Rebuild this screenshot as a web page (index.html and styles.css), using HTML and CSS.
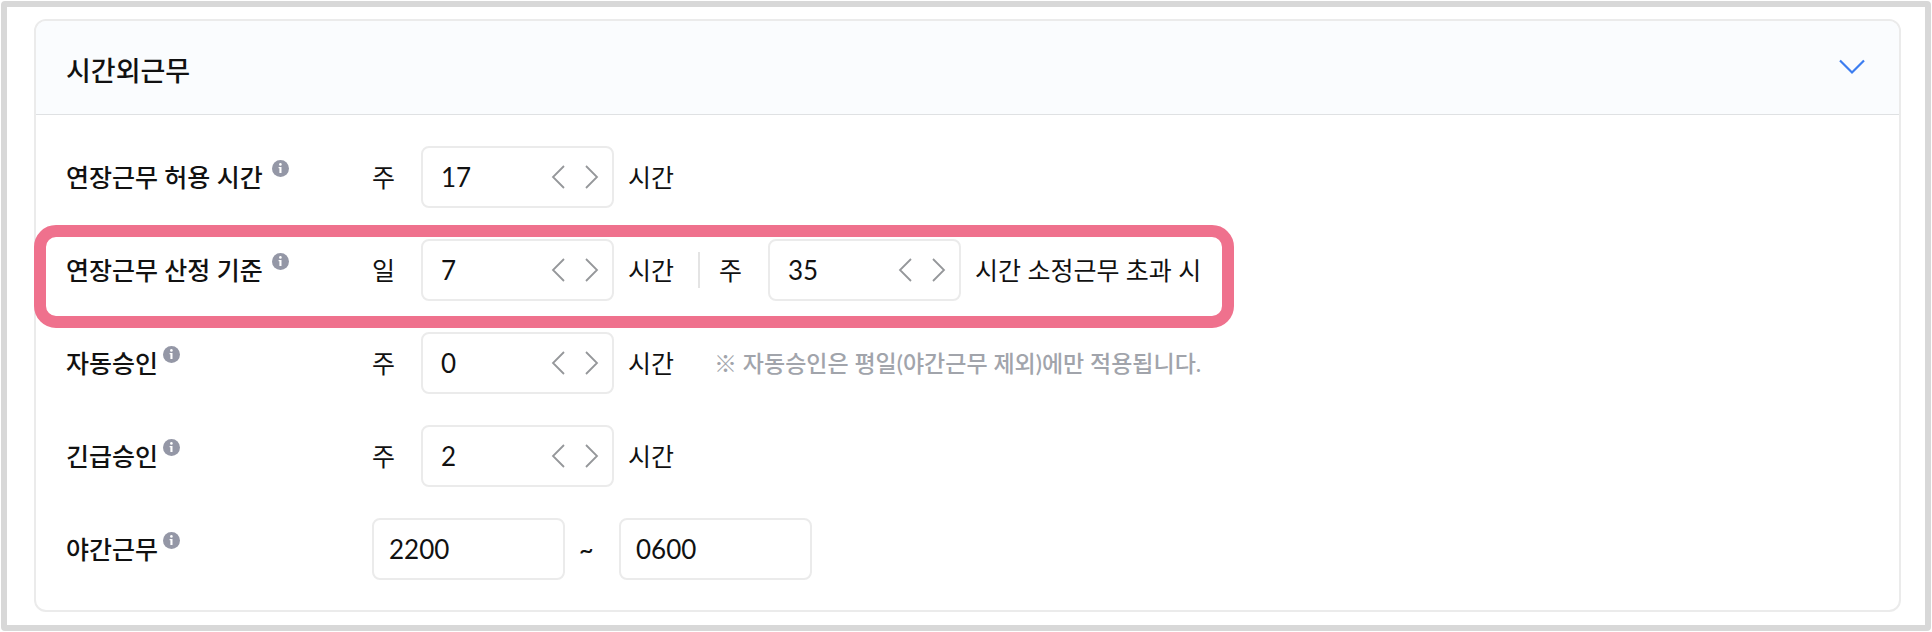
FILE: index.html
```html
<!DOCTYPE html>
<html lang="ko">
<head>
<meta charset="utf-8">
<meta name="viewport" content="width=device-width, initial-scale=1">
<title>시간외근무</title>
<link rel="stylesheet" href="styles.css">
</head>
<body>
<svg class="sprite" aria-hidden="true">
  <symbol id="info" viewBox="0 0 17 17"><circle cx="8.5" cy="8.5" r="8.5" fill="#9497a6"/><circle cx="8.4" cy="4.4" r="1.3" fill="#fff"/><path d="M6.6 7h2.9v6H7.4V8.3h-.8z" fill="#fff"/></symbol>
  <symbol id="prev" viewBox="0 0 14 24"><path d="M13 1 2 12l11 11" fill="none" stroke="currentColor" stroke-width="1.8"/></symbol>
  <symbol id="next" viewBox="0 0 14 24"><path d="M1 1 12 12 1 23" fill="none" stroke="currentColor" stroke-width="1.8"/></symbol>
</svg>
<main class="frame">
  <section class="card">
    <header class="card-header">
      <h1 class="title">시간외근무</h1>
      <button class="toggle" type="button" aria-label="접기"><svg width="26" height="16" viewBox="0 0 26 16"><path d="M1 1.500 13 13.500 25 1.500" fill="none" stroke="#3c7df0" stroke-width="2.2"/></svg></button>
    </header>
    <div class="rows">
      <div class="row">
        <div class="name name-wide"><label for="allow">연장근무 허용 시간</label><svg class="info"><use href="#info"/></svg></div>
        <span class="prefix">주</span>
        <div class="stepper"><input id="allow" class="value" type="text" value="17"><button class="step" type="button" aria-label="감소"><svg class="arrow"><use href="#prev"/></svg></button><button class="step" type="button" aria-label="증가"><svg class="arrow"><use href="#next"/></svg></button></div>
        <span class="unit">시간</span>
      </div>
      <div class="row highlighted">
        <div class="name name-wide"><label for="day">연장근무 산정 기준</label><svg class="info"><use href="#info"/></svg></div>
        <span class="prefix">일</span>
        <div class="stepper"><input id="day" class="value" type="text" value="7"><button class="step" type="button" aria-label="감소"><svg class="arrow"><use href="#prev"/></svg></button><button class="step" type="button" aria-label="증가"><svg class="arrow"><use href="#next"/></svg></button></div>
        <span class="unit">시간</span>
        <span class="divider"></span>
        <label class="prefix" for="week">주</label>
        <div class="stepper"><input id="week" class="value" type="text" value="35"><button class="step" type="button" aria-label="감소"><svg class="arrow"><use href="#prev"/></svg></button><button class="step" type="button" aria-label="증가"><svg class="arrow"><use href="#next"/></svg></button></div>
        <span class="unit">시간 소정근무 초과 시</span>
      </div>
      <div class="row">
        <div class="name"><label for="auto">자동승인</label><svg class="info"><use href="#info"/></svg></div>
        <span class="prefix">주</span>
        <div class="stepper"><input id="auto" class="value" type="text" value="0"><button class="step" type="button" aria-label="감소"><svg class="arrow"><use href="#prev"/></svg></button><button class="step" type="button" aria-label="증가"><svg class="arrow"><use href="#next"/></svg></button></div>
        <span class="unit">시간</span>
        <span class="note">※ 자동승인은 평일(야간근무 제외)에만 적용됩니다.</span>
      </div>
      <div class="row">
        <div class="name"><label for="urgent">긴급승인</label><svg class="info"><use href="#info"/></svg></div>
        <span class="prefix">주</span>
        <div class="stepper"><input id="urgent" class="value" type="text" value="2"><button class="step" type="button" aria-label="감소"><svg class="arrow"><use href="#prev"/></svg></button><button class="step" type="button" aria-label="증가"><svg class="arrow"><use href="#next"/></svg></button></div>
        <span class="unit">시간</span>
      </div>
      <div class="row">
        <div class="name"><label for="night">야간근무</label><svg class="info"><use href="#info"/></svg></div>
        <input id="night" class="time" type="text" value="2200">
        <span class="tilde">~</span>
        <input class="time" type="text" value="0600" aria-label="야간근무 종료">
      </div>
    </div>
  </section>
</main>
</body>
</html>
```
FILE: styles.css
```css
*, *::after { box-sizing: border-box; }
body {
  margin: 0;
  padding: 1px;
  background: #fff;
  color: #111;
  font: 400 25px/36px Lato, "Noto Sans CJK KR", sans-serif;
}
.sprite { position: absolute; width: 0; height: 0; }
button { border: 0; padding: 0; background: none; cursor: pointer; }
svg { display: block; }

.frame {
  border: 6px solid #d8d8d8;
  border-radius: 4px;
  padding: 12px 24px 13px 27px;
}
.card {
  border: 2px solid #ebebeb;
  border-radius: 12px;
}
.card-header {
  display: flex;
  justify-content: space-between;
  align-items: center;
  height: 94px;
  padding: 0 34px 0 30px;
  border-bottom: 1px solid #dfe1e3;
  border-radius: 10px 10px 0 0;
  background: #fafcfe;
}
.title { margin: 0; padding-top: 6px; font-size: 27px; font-weight: 500; }
.toggle { padding-bottom: 2px; }

.rows {
  display: flex;
  flex-direction: column;
  gap: 31px;
  padding: 31px 30px 30px;
}
.row { position: relative; display: flex; align-items: center; }
.highlighted::after {
  content: "";
  position: absolute;
  inset: -14px auto -27px -32px;
  width: 1200px;
  border: 12px solid #ef718d;
  border-radius: 22px;
  pointer-events: none;
}
.name {
  display: flex;
  flex: none;
  gap: 5px;
  width: 306px;
  font-weight: 500;
}
.name-wide { gap: 9px; }
.info { width: 17px; height: 17px; margin-top: 1px; }
.prefix { flex: none; width: 49px; }
.stepper, .time {
  flex: none;
  width: 193px;
  height: 62px;
  border: 2px solid #ebebeb;
  border-radius: 8px;
  background: #fff;
}
.stepper { display: flex; align-items: center; gap: 20px; padding: 0 13px 0 18px; }
.value {
  flex: 1;
  min-width: 0;
  border: 0;
  padding: 0;
  background: none;
}
.value, .time { color: #111; font: 400 26px/36px Lato, "Noto Sans CJK KR", sans-serif; outline: 0; }
.time { padding: 0 15px; }
.arrow { width: 14px; height: 24px; color: #95979a; }
.unit { margin-left: 14px; white-space: nowrap; }
.divider { width: 2px; height: 36px; margin: 0 19px 0 24px; background: #e4e4e4; }
.note { margin-left: 40px; color: #a1a4ab; font-size: 23px; font-weight: 500; white-space: nowrap; }
.tilde { flex: none; width: 54px; padding-left: 14px; font-weight: 500; }
```
